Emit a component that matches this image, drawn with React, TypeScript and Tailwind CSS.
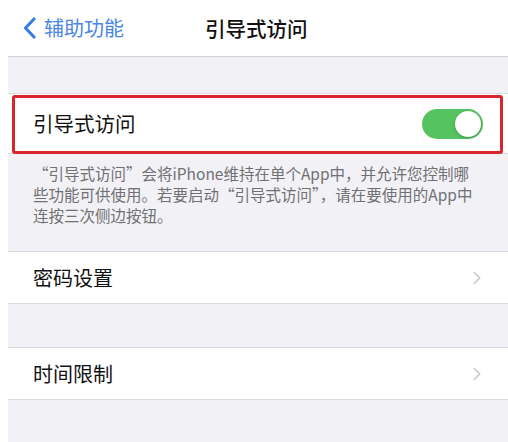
import { ChevronRight } from "lucide-react";

const font = { fontFamily: '"Noto Sans CJK SC", "Noto Sans", sans-serif' };

function LinkRow({ label }: { label: string }) {
  return (
    <div className="flex h-[53px] items-center justify-between border-y border-[#dcdce0] bg-white pl-[25px] pr-[20px]">
      <span className="text-[20px] text-[#111]">{label}</span>
      <ChevronRight className="h-[22px] w-[22px] text-[#c8c8cc]" strokeWidth={1.75} />
    </div>
  );
}

export default function App() {
  return (
    <div className="h-[442px] w-[508px] overflow-hidden bg-white pl-2" style={font}>
      {/* nav bar */}
      <div className="flex h-[57px] items-center border-b border-[#d4d4d8] bg-white">
        <div className="flex w-[197px] items-center pl-[14px]">
          <svg width="15" height="22" viewBox="0 0 15 22" className="mr-[7px]">
            <path d="M12 2 L3.5 11 L12 20" fill="none" stroke="#3a7fe0" strokeWidth="3.2" strokeLinecap="round" strokeLinejoin="round" />
          </svg>
          <span className="text-[20px] text-[#4a86e0]">辅助功能</span>
        </div>
        <span className="text-[20.5px] font-medium text-[#111]">引导式访问</span>
      </div>

      <div className="bg-[#f2f2f6]">
        <div className="h-[36px]" />

        {/* guided access toggle row */}
        <div className="relative flex h-[61px] items-center justify-between border-y border-[#dcdce0] bg-white pl-[25px] pr-[25px]">
          <span className="text-[20.5px] text-[#111]">引导式访问</span>
          <div className="flex h-[30px] w-[61px] items-center justify-end rounded-full bg-[#55c35f] p-[2px]">
            <div className="h-[26px] w-[26px] rounded-full bg-white shadow-[0_1px_3px_rgba(0,0,0,0.25)]" />
          </div>
          <div className="pointer-events-none absolute -bottom-[1px] left-[4px] right-[5px] top-[1px] rounded-[3px] border-[3px] border-[#d8262b]" />
        </div>

        <div className="h-[97px] pl-[25px] pt-[9px] text-[15.5px] leading-[21px] text-[#707075]">
          <div className="whitespace-nowrap">“引导式访问”会将iPhone维持在单个App中，并允许您控制哪</div>
          <div className="whitespace-nowrap">些功能可供使用。若要启动“引导式访问”，请在要使用的App中</div>
          <div className="whitespace-nowrap">连按三次侧边按钮。</div>
        </div>

        <LinkRow label="密码设置" />
        <div className="h-[43px]" />
        <LinkRow label="时间限制" />
        <div className="h-[60px]" />
      </div>
    </div>
  );
}
